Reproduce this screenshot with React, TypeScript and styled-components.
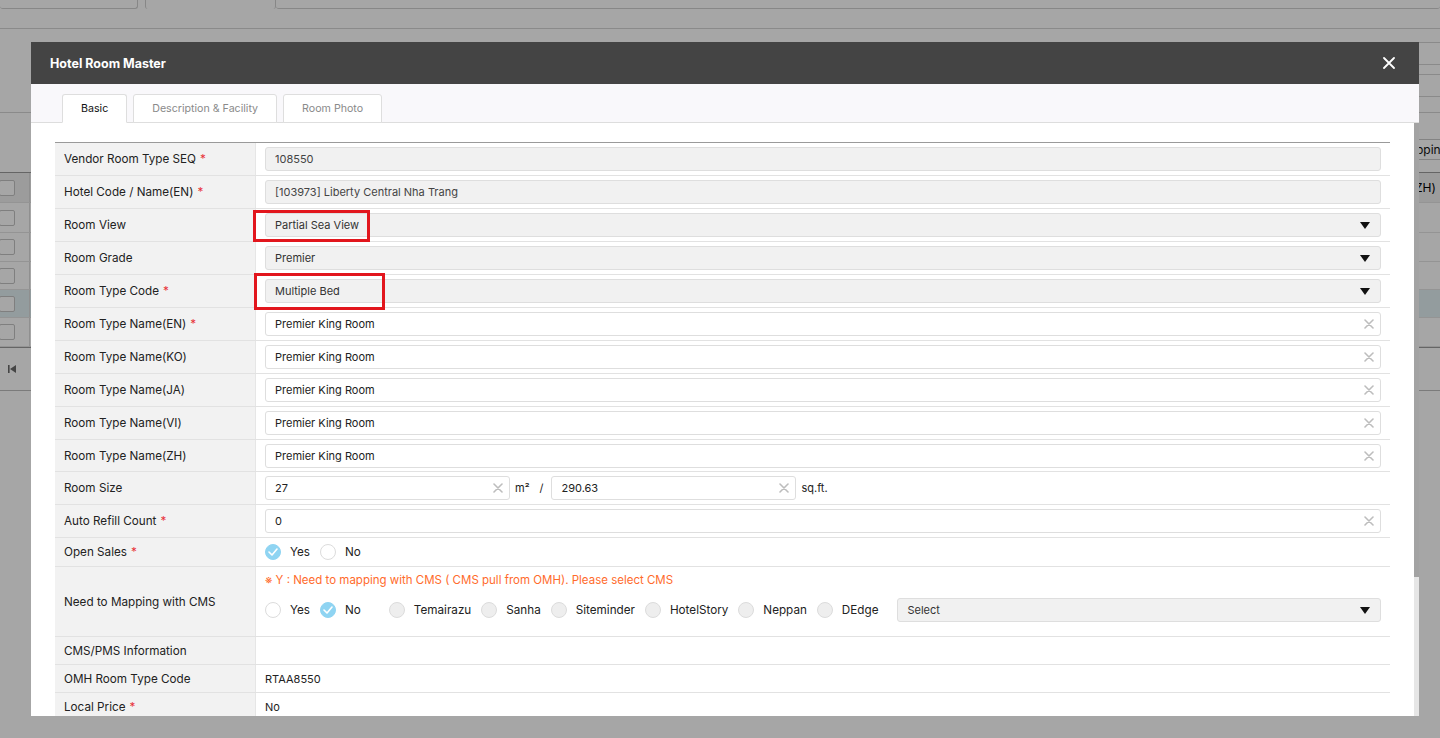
import React from "react";
import styled, { createGlobalStyle } from "styled-components";

const GlobalStyle = createGlobalStyle`
  html, body { margin: 0; padding: 0; width: 100%; height: 100%; overflow: hidden; }
  body { font-family: Inter, "Noto Sans", "Liberation Sans", Arial, sans-serif; background: #fff; }
  * { box-sizing: border-box; }
  #root { width: 100%; height: 100%; }
`;

/* ---------- background page (behind the dialog) ---------- */
const BgPage = styled.div`
  width: 100%;
  height: 100vh;
  overflow: hidden;
  background: #fff;
  display: flex;
  flex-direction: column;
  color: #111;
  font-size: 12px;
`;
const BgTabs = styled.div`
  height: 9px;
  display: flex;
  flex: none;
`;
const BgTab = styled.div<{ $w?: number; $active?: boolean }>`
  flex: ${(p) => (p.$w ? `0 0 ${p.$w}px` : "1 1 auto")};
  border-right: ${(p) => (p.$w ? "1px solid #cfcfcf" : "0")};
  border-left: ${(p) => (p.$active ? "1px solid #cfcfcf" : "0")};
  border-bottom: ${(p) => (p.$active ? "0" : "1px solid #cfcfcf")};
  border-radius: 0 0 3px 3px;
  margin-right: ${(p) => (p.$w && !p.$active ? "7px" : "0")};
`;
const BgSubnav = styled.div`
  height: 20px;
  flex: none;
  border-bottom: 1px solid #d4d4d4;
`;
const BgSearch = styled.div`
  height: 84px;
  flex: none;
  border-bottom: 1px solid #d4d4d4;
  display: flex;
  justify-content: flex-end;
`;
const BgFormPanel = styled.div`
  width: 320px;
  display: flex;
  flex-direction: column;
`;
const BgFormRow = styled.div<{ $h: number }>`
  height: ${(p) => p.$h}px;
  border-bottom: 1px solid #d4d4d4;
  flex: none;
`;
const BgToolbar = styled.div`
  height: 60px;
  flex: none;
  display: flex;
  align-items: flex-end;
  justify-content: flex-end;
  padding-bottom: 12px;
  border-bottom: 1px solid #9c9c9c;
`;
const BgButton = styled.div`
  height: 21px;
  display: flex;
  align-items: center;
  padding: 0 10px;
  border: 1px solid #c9c9c9;
  border-right: 0;
  margin-right: -18px;
  font-size: 12px;
  color: #111;
  white-space: nowrap;
`;
const BgGridRow = styled.div<{ $h: number; $head?: boolean; $sel?: boolean }>`
  height: ${(p) => p.$h}px;
  flex: none;
  display: grid;
  grid-template-columns: 30px 1fr 130px;
  align-items: center;
  background: ${(p) => (p.$head ? "#f0f0f0" : p.$sel ? "#e2f0f3" : "#fff")};
  border-bottom: 1px solid #e4e4e4;
`;
const BgCheckCell = styled.div`
  height: 100%;
  display: flex;
  align-items: center;
  border-right: 1px solid #dcdcdc;
`;
const BgCheck = styled.span`
  width: 16px;
  height: 16px;
  margin-left: -1px;
  border: 1px solid #c4c4c4;
  border-radius: 2px;
  background: #fff;
`;
const BgHeadText = styled.div`
  white-space: nowrap;
  font-size: 12px;
  color: #000;
`;
const BgTableEnd = styled.div`
  height: 0;
  border-top: 1px solid #9c9c9c;
`;
const BgPager = styled.div`
  height: 43px;
  flex: none;
  display: flex;
  align-items: center;
  padding-left: 8px;
  border-bottom: 1px solid #bdbdbd;
`;

const Dim = styled.div`
  position: fixed;
  inset: 0;
  background: rgba(0, 0, 0, 0.35);
`;

/* ---------- dialog ---------- */
const Modal = styled.div`
  position: fixed;
  top: 42px;
  left: 31px;
  width: 1388px;
  height: 674px;
  display: flex;
  flex-direction: column;
  background: #fff;
  overflow: hidden;
`;
const Header = styled.div`
  height: 42px;
  flex: none;
  background: #444444;
  color: #fff;
  display: flex;
  align-items: center;
  justify-content: space-between;
  padding: 0 23px 0 19px;
  font-size: 12.5px;
  font-weight: 700;
`;
const CloseBtn = styled.button`
  border: 0;
  background: transparent;
  padding: 0;
  width: 14px;
  height: 14px;
  display: flex;
  align-items: center;
  justify-content: center;
  cursor: pointer;
`;
const TabBar = styled.div`
  height: 39px;
  flex: none;
  background: #f9f8fb;
  border-bottom: 1px solid #dddddd;
  display: flex;
  align-items: flex-end;
  gap: 6px;
  padding-left: 31px;
`;
const Tab = styled.div<{ $active?: boolean }>`
  height: 29px;
  margin-bottom: -1px;
  padding: 0 18px;
  display: flex;
  align-items: center;
  background: #fff;
  border: 1px solid #dedede;
  border-bottom: ${(p) => (p.$active ? "1px solid #fff" : "1px solid #dedede")};
  border-radius: 3px 3px 0 0;
  font-size: 10.65px;
  color: ${(p) => (p.$active ? "#111" : "#8a8a8a")};
`;
const Body = styled.div`
  flex: 1;
  min-height: 0;
  display: flex;
`;
const Content = styled.div`
  flex: 1;
  min-width: 0;
  overflow: hidden;
  padding: 19px 24px 0 24px;
`;
const ScrollTrack = styled.div`
  width: 5px;
  flex: none;
  background: #e6e6e6;
  display: flex;
  flex-direction: column;
`;
const ScrollThumb = styled.div`
  height: 454px;
  background: #a3a3a3;
`;

const Table = styled.div`
  border-top: 1px solid #9a9a9a;
  display: flex;
  flex-direction: column;
`;
const Row = styled.div<{ $h: number }>`
  height: ${(p) => p.$h}px;
  flex: none;
  display: grid;
  grid-template-columns: 201px 1fr;
  border-bottom: 1px solid #e2e2e2;
`;
const Label = styled.div`
  background: #f2f2f2;
  border-right: 1px solid #e6e6e6;
  padding-left: 9px;
  display: flex;
  align-items: center;
  font-size: 11.7px;
  color: #222;
  white-space: nowrap;
`;
const Req = styled.span`
  color: #e8333a;
  margin-left: 4px;
`;
const Value = styled.div`
  position: relative;
  display: flex;
  align-items: center;
  gap: 5px;
  padding: 0 9px;
  font-size: 11px;
  color: #222;
  min-width: 0;
`;
const StackValue = styled(Value)`
  flex-direction: column;
  align-items: stretch;
  justify-content: flex-start;
  gap: 10px;
  padding-top: 5px;
`;
const Field = styled.div<{ $disabled?: boolean; $w?: number }>`
  height: 24px;
  flex: ${(p) => (p.$w ? `0 0 ${p.$w}px` : "1 1 auto")};
  display: flex;
  align-items: center;
  border: 1px solid #dedede;
  border-radius: 3px;
  background: ${(p) => (p.$disabled ? "#f1f1f1" : "#fff")};
  padding: 0 6px 0 9px;
  min-width: 0;
`;
const SelectBox = styled(Field)`
  padding: 0 10px 0 9px;
  justify-content: space-between;
  color: #333;
  font-size: 11px;
`;
const FieldInput = styled.input`
  flex: 1;
  min-width: 0;
  border: 0;
  outline: 0;
  background: transparent;
  font-family: inherit;
  font-size: 11px;
  color: #222;
  padding: 0;
  &:disabled { color: #444; -webkit-text-fill-color: #444; }
`;
const Unit = styled.span`
  font-size: 11px;
  color: #222;
`;
const Slash = styled.span`
  font-size: 11px;
  color: #222;
  margin: 0 3px 0 5px;
`;
const Mark = styled.span<{ $l: number; $t: number; $w: number; $h: number }>`
  position: absolute;
  left: ${(p) => p.$l}px;
  top: ${(p) => p.$t}px;
  width: ${(p) => p.$w}px;
  height: ${(p) => p.$h}px;
  border: 3px solid #e2161d;
  pointer-events: none;
`;
const Notice = styled.div`
  font-size: 11.5px;
  line-height: 16px;
  color: #ff6b2c;
  white-space: nowrap;
`;
const OptionLine = styled.div`
  display: flex;
  align-items: center;
  height: 24px;
`;
const RadioGroup = styled.div<{ $gap?: number }>`
  display: flex;
  align-items: center;
  gap: 10px;
  margin-right: ${(p) => p.$gap ?? 0}px;
`;
const RadioItem = styled.label`
  display: inline-flex;
  align-items: center;
  gap: 9px;
  font-size: 11.7px;
  color: #222;
  white-space: nowrap;
`;
const Circle = styled.span<{ $state: "on" | "off" | "dis" }>`
  width: 16px;
  height: 16px;
  flex: none;
  border-radius: 50%;
  display: inline-flex;
  align-items: center;
  justify-content: center;
  background: ${(p) => (p.$state === "on" ? "#8fd4f2" : p.$state === "dis" ? "#eeeeee" : "#fff")};
  border: 1px solid ${(p) => (p.$state === "on" ? "#8fd4f2" : "#dcdcdc")};
`;
const PlainText = styled.span`
  font-size: 11px;
  color: #222;
`;

/* ---------- icons ---------- */
const Caret = () => (
  <svg width="10" height="7" viewBox="0 0 10 7">
    <polygon points="0,0 10,0 5,7" fill="#111" />
  </svg>
);
const ClearX = () => (
  <svg width="10" height="10" viewBox="0 0 10 10">
    <path d="M1 1 L9 9 M9 1 L1 9" stroke="#bdbdbd" strokeWidth="1.6" strokeLinecap="round" />
  </svg>
);
const Check = () => (
  <svg width="10" height="8" viewBox="0 0 10 8">
    <path d="M1 4 L4 7 L9 1" stroke="#fff" strokeWidth="1.6" fill="none" strokeLinecap="round" strokeLinejoin="round" />
  </svg>
);
const CloseIcon = () => (
  <svg width="12" height="12" viewBox="0 0 12 12">
    <path d="M1 1 L11 11 M11 1 L1 11" stroke="#fff" strokeWidth="1.8" strokeLinecap="round" />
  </svg>
);
const FirstPage = () => (
  <svg width="8" height="8" viewBox="0 0 8 8">
    <rect x="0" y="0" width="1.6" height="8" fill="#6a6a6a" />
    <polygon points="8,0 8,8 2,4" fill="#6a6a6a" />
  </svg>
);

/* ---------- pieces ---------- */
const TextField = ({ value, w, disabled }: { value: string; w?: number; disabled?: boolean }) => (
  <Field $w={w} $disabled={disabled}>
    <FieldInput defaultValue={value} disabled={disabled} />
    {!disabled && <ClearX />}
  </Field>
);
const Select = ({ value }: { value: string }) => (
  <SelectBox $disabled>
    <span>{value}</span>
    <Caret />
  </SelectBox>
);
const Radio = ({ label, state }: { label: string; state: "on" | "off" | "dis" }) => (
  <RadioItem>
    <Circle $state={state}>{state === "on" && <Check />}</Circle>
    {label}
  </RadioItem>
);
const Lbl = ({ text, req }: { text: string; req?: boolean }) => (
  <Label>
    {text}
    {req && <Req>*</Req>}
  </Label>
);

const nameRows: { label: string; req?: boolean; h: number }[] = [
  { label: "Room Type Name(EN)", req: true, h: 33 },
  { label: "Room Type Name(KO)", h: 33 },
  { label: "Room Type Name(JA)", h: 33 },
  { label: "Room Type Name(VI)", h: 33 },
  { label: "Room Type Name(ZH)", h: 32 },
];

const cmsList = ["Temairazu", "Sanha", "Siteminder", "HotelStory", "Neppan", "DEdge"];

export default function App() {
  return (
    <>
      <GlobalStyle />
      <BgPage>
        <BgTabs>
          <BgTab $w={138} />
          <BgTab $w={131} $active />
          <BgTab />
        </BgTabs>
        <BgSubnav />
        <BgSearch>
          <BgFormPanel>
            <BgFormRow $h={14} />
            <BgFormRow $h={22} />
            <BgFormRow $h={10} />
            <BgFormRow $h={22} />
          </BgFormPanel>
        </BgSearch>
        <BgToolbar>
          <BgButton>Room Mapping</BgButton>
        </BgToolbar>
        <BgGridRow $h={30} $head>
          <BgCheckCell>
            <BgCheck />
          </BgCheckCell>
          <div />
          <BgHeadText>Room Type Name(ZH)</BgHeadText>
        </BgGridRow>
        {[30, 29, 28, 28, 29].map((h, i) => (
          <BgGridRow key={i} $h={h} $sel={i === 3}>
            <BgCheckCell>
              <BgCheck />
            </BgCheckCell>
            <div />
            <div />
          </BgGridRow>
        ))}
        <BgTableEnd />
        <BgPager>
          <FirstPage />
        </BgPager>
      </BgPage>
      <Dim />
      <Modal>
        <Header>
          <span>Hotel Room Master</span>
          <CloseBtn aria-label="close">
            <CloseIcon />
          </CloseBtn>
        </Header>
        <TabBar>
          <Tab $active>Basic</Tab>
          <Tab>Description &amp; Facility</Tab>
          <Tab>Room Photo</Tab>
        </TabBar>
        <Body>
          <Content>
            <Table>
              <Row $h={33}>
                <Lbl text="Vendor Room Type SEQ" req />
                <Value>
                  <TextField value="108550" disabled />
                </Value>
              </Row>
              <Row $h={33}>
                <Lbl text="Hotel Code / Name(EN)" req />
                <Value>
                  <TextField value="[103973] Liberty Central Nha Trang" disabled />
                </Value>
              </Row>
              <Row $h={33}>
                <Lbl text="Room View" />
                <Value>
                  <Select value="Partial Sea View" />
                  <Mark $l={-3} $t={1} $w={117} $h={32} />
                </Value>
              </Row>
              <Row $h={33}>
                <Lbl text="Room Grade" />
                <Value>
                  <Select value="Premier" />
                </Value>
              </Row>
              <Row $h={33}>
                <Lbl text="Room Type Code" req />
                <Value>
                  <Select value="Multiple Bed" />
                  <Mark $l={-2} $t={-2} $w={131} $h={37} />
                </Value>
              </Row>
              {nameRows.map((r) => (
                <Row $h={r.h} key={r.label}>
                  <Lbl text={r.label} req={r.req} />
                  <Value>
                    <TextField value="Premier King Room" />
                  </Value>
                </Row>
              ))}
              <Row $h={33}>
                <Lbl text="Room Size" />
                <Value>
                  <TextField value="27" w={245} />
                  <Unit>m²</Unit>
                  <Slash>/</Slash>
                  <TextField value="290.63" w={245} />
                  <Unit>sq.ft.</Unit>
                </Value>
              </Row>
              <Row $h={33}>
                <Lbl text="Auto Refill Count" req />
                <Value>
                  <TextField value="0" />
                </Value>
              </Row>
              <Row $h={29}>
                <Lbl text="Open Sales" req />
                <Value>
                  <RadioGroup>
                    <Radio label="Yes" state="on" />
                    <Radio label="No" state="off" />
                  </RadioGroup>
                </Value>
              </Row>
              <Row $h={70}>
                <Lbl text="Need to Mapping with CMS" />
                <StackValue>
                  <Notice>※ Y : Need to mapping with CMS ( CMS pull from OMH). Please select CMS</Notice>
                  <OptionLine>
                    <RadioGroup $gap={28}>
                      <Radio label="Yes" state="off" />
                      <Radio label="No" state="on" />
                    </RadioGroup>
                    <RadioGroup $gap={19}>
                      {cmsList.map((c) => (
                        <Radio key={c} label={c} state="dis" />
                      ))}
                    </RadioGroup>
                    <Select value="Select" />
                  </OptionLine>
                </StackValue>
              </Row>
              <Row $h={28}>
                <Lbl text="CMS/PMS Information" />
                <Value />
              </Row>
              <Row $h={28}>
                <Lbl text="OMH Room Type Code" />
                <Value>
                  <PlainText>RTAA8550</PlainText>
                </Value>
              </Row>
              <Row $h={28}>
                <Lbl text="Local Price" req />
                <Value>
                  <PlainText>No</PlainText>
                </Value>
              </Row>
            </Table>
          </Content>
          <ScrollTrack>
            <ScrollThumb />
          </ScrollTrack>
        </Body>
      </Modal>
    </>
  );
}
